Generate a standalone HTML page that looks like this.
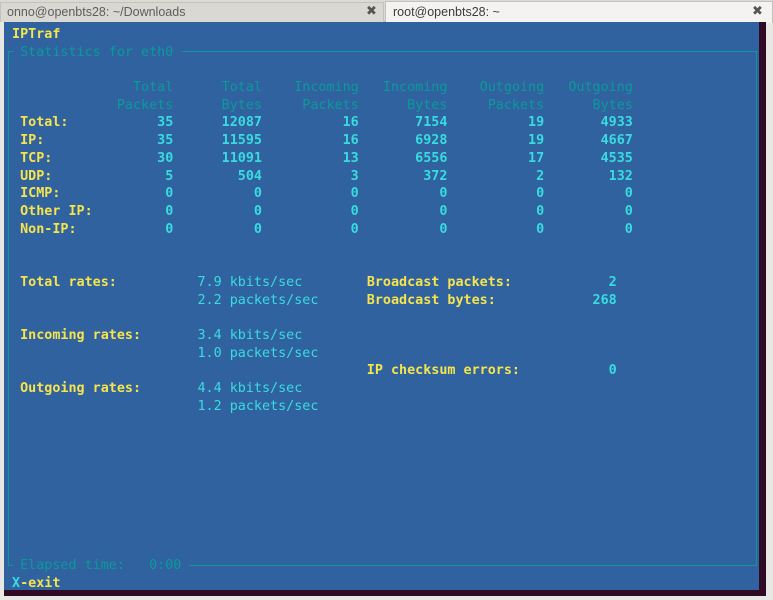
<!DOCTYPE html>
<html><head><meta charset="utf-8"><style>
*{margin:0;padding:0;box-sizing:border-box}
body{width:773px;height:600px;overflow:hidden;background:#e8e7e3;position:relative;font-family:"Liberation Sans","DejaVu Sans",sans-serif}
.tabbar{position:absolute;left:0;top:0;width:773px;height:22px;background:#dcdad5;border-bottom:1px solid #b8b6b1}
.tab1{position:absolute;left:0;top:2px;width:384px;height:20px;background:#dad8d3;border:1px solid #c4c2bd;border-bottom:none;color:#5e5e5e;font-size:12.5px;line-height:18px;padding-left:6px}
.tab2{position:absolute;left:385px;top:1px;width:388px;height:22px;background:#f4f3f1;border:1px solid #c4c2bd;border-bottom:none;color:#3c3c3c;font-size:12.5px;line-height:20px;padding-left:7px}
.x{position:absolute;font-size:13px;font-weight:bold;color:#555}
.term{position:absolute;left:4px;top:22px;width:755px;height:568px;background:#3162a0}
.purple{position:absolute;background:#300a24}
pre{position:absolute;left:4px;top:25.8px;font-family:"DejaVu Sans Mono",monospace;font-size:13.4px;line-height:17.72px;color:#38dcdf;font-weight:bold;white-space:pre}
.y{color:#f5e44d}
.d{color:#0a9a9a;font-weight:normal}
.n{font-weight:normal}
.ln{position:absolute;background:#0a9a9a}
</style></head><body>
<div class="tabbar"></div>
<div class="tab1">onno@openbts28: ~/Downloads</div>
<div class="x" style="left:366px;top:3px">✖</div>
<div class="tab2">root@openbts28: ~</div>
<div class="x" style="left:752px;top:3px">✖</div>
<div class="term"></div>
<div class="purple" style="left:759px;top:22px;width:7px;height:574px"></div>
<div class="purple" style="left:4px;top:590px;width:762px;height:6px"></div>
<div class="ln" style="left:8px;top:51px;width:1px;height:514px"></div>
<div class="ln" style="left:756px;top:51px;width:1px;height:514px"></div>
<div class="ln" style="left:8px;top:51px;width:5px;height:1px"></div>
<div class="ln" style="left:182px;top:51px;width:575px;height:1px"></div>
<div class="ln" style="left:8px;top:565px;width:5px;height:1px"></div>
<div class="ln" style="left:189px;top:565px;width:568px;height:1px"></div>
<pre><span class="y"> IPTraf</span>
<span class="d">  Statistics for eth0</span>

<span class="d">                Total      Total    Incoming   Incoming    Outgoing   Outgoing</span>
<span class="d">              Packets      Bytes     Packets      Bytes     Packets      Bytes</span>
<span class="y">  Total:</span>           35      12087          16       7154          19       4933
<span class="y">  IP:</span>              35      11595          16       6928          19       4667
<span class="y">  TCP:</span>             30      11091          13       6556          17       4535
<span class="y">  UDP:</span>              5        504           3        372           2        132
<span class="y">  ICMP:</span>             0          0           0          0           0          0
<span class="y">  Other IP:</span>         0          0           0          0           0          0
<span class="y">  Non-IP:</span>           0          0           0          0           0          0


<span class="y">  Total rates:</span>          <span class="n">7.9 kbits/sec</span>        <span class="y">Broadcast packets:</span>            2
                        <span class="n">2.2 packets/sec</span>      <span class="y">Broadcast bytes:</span>            268

<span class="y">  Incoming rates:</span>       <span class="n">3.4 kbits/sec</span>
                        <span class="n">1.0 packets/sec</span>
                                             <span class="y">IP checksum errors:</span>           0
<span class="y">  Outgoing rates:</span>       <span class="n">4.4 kbits/sec</span>
                        <span class="n">1.2 packets/sec</span>








<span class="d">  Elapsed time:   0:00</span>
 X<span class="y">-exit</span></pre>
</body></html>
